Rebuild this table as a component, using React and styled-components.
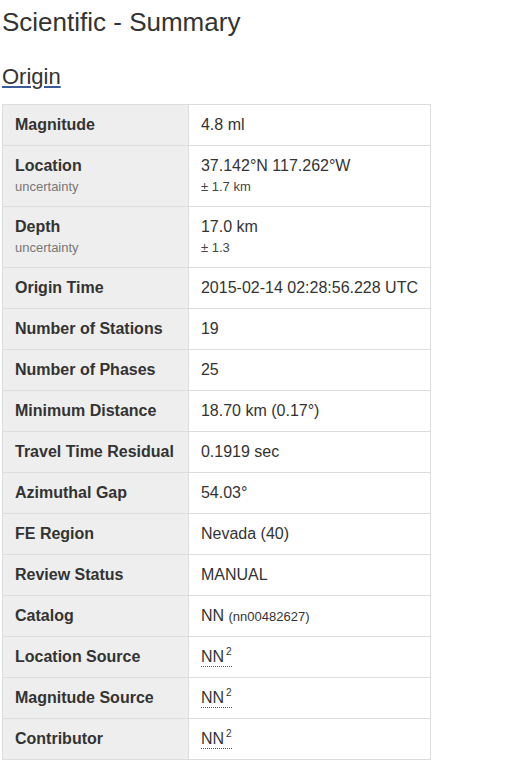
import styled, {createGlobalStyle} from 'styled-components';

const GlobalStyle = createGlobalStyle`
  body {
    margin: 0;
    background: #fff;
    font-family: "Liberation Sans", Arial, sans-serif;
    color: #333;
  }
`

const Page = styled.div`
  padding: 0 2px;
`

const Title = styled.h1`
  margin: 6px 0 0;
  font-size: 26px;
  font-weight: normal;
  line-height: 32px;
`

const SectionLink = styled.a`
  display: inline-block;
  margin-top: 26px;
  font-size: 22px;
  line-height: 26px;
  color: #333;
  text-decoration: underline;
  text-decoration-color: #3a5a9a;
  text-underline-offset: 2px;
`

const Table = styled.table`
  margin-top: 14px;
  width: 429px;
  border-collapse: collapse;
  font-size: 16px;
  line-height: 22px;
`

const Header = styled.th`
  width: 161px;
  text-align: left;
  vertical-align: top;
  padding: 9px 12px;
  background: #eee;
  border: 1px solid #ddd;
  font-weight: bold;
  white-space: nowrap;
`

const Cell = styled.td`
  text-align: left;
  vertical-align: top;
  padding: 9px 12px;
  border: 1px solid #ddd;
  white-space: nowrap;
`

const Small = styled.small`
  display: block;
  font-size: 13px;
  line-height: 20px;
  color: ${props => props.muted ? '#777' : '#444'};
  font-weight: normal;
`

const Inline = styled.span`
  font-size: 13px;
  line-height: 1;
`

const Abbr = styled.abbr`
  text-decoration: none;
  border-bottom: 1px dotted #555;
  padding-bottom: 1px;
`

const Sup = styled.sup`
  font-size: 10px;
  line-height: 0;
  vertical-align: 0;
  position: relative;
  top: -7px;
  margin-left: 2px;
`

const Source = () => (
    <Abbr>NN<Sup>2</Sup></Abbr>
)

const rows = [
    ['Magnitude', '4.8 ml'],
    ['Location', '37.142°N 117.262°W', '± 1.7 km'],
    ['Depth', '17.0 km', '± 1.3'],
    ['Origin Time', '2015-02-14 02:28:56.228 UTC'],
    ['Number of Stations', '19'],
    ['Number of Phases', '25'],
    ['Minimum Distance', '18.70 km (0.17°)'],
    ['Travel Time Residual', '0.1919 sec'],
    ['Azimuthal Gap', '54.03°'],
    ['FE Region', 'Nevada (40)'],
    ['Review Status', 'MANUAL'],
    ['Catalog', <>NN <Inline>(nn00482627)</Inline></>],
    ['Location Source', <Source/>],
    ['Magnitude Source', <Source/>],
    ['Contributor', <Source/>],
]

function App() {
    return (
        <Page>
            <GlobalStyle/>
            <Title>Scientific - Summary</Title>
            <SectionLink href="#origin">Origin</SectionLink>
            <Table>
                <tbody>
                {rows.map(([label, value, extra]) => (
                    <tr key={label}>
                        <Header>
                            {label}
                            {extra && <Small muted>uncertainty</Small>}
                        </Header>
                        <Cell>
                            {value}
                            {extra && <Small>{extra}</Small>}
                        </Cell>
                    </tr>
                ))}
                </tbody>
            </Table>
        </Page>
    );
}

export default App;
